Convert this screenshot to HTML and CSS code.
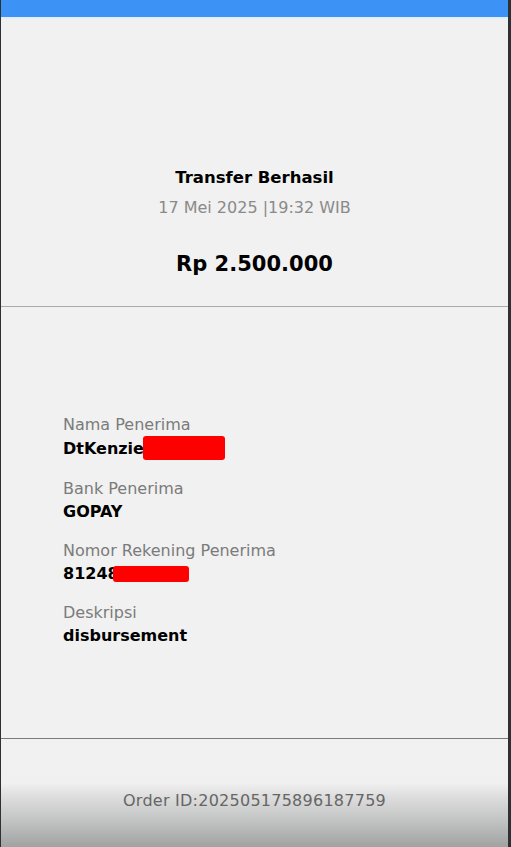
FILE: index.html
```html
<!DOCTYPE html>
<html lang="id">
<head>
<meta charset="utf-8">
<title>Transfer Berhasil</title>
<link rel="stylesheet" href="styles.css">
</head>
<body>
<div class="screen">
  <div class="topbar"></div>
  <section class="summary">
    <div class="title">Transfer Berhasil</div>
    <div class="date">17 Mei 2025 |19:32 WIB</div>
    <div class="amount">Rp 2.500.000</div>
  </section>
  <section class="details">
    <div class="field">
      <div class="label">Nama Penerima</div>
      <div class="value">DtKenzie<span class="redact redact-name"></span></div>
    </div>
    <div class="field">
      <div class="label">Bank Penerima</div>
      <div class="value">GOPAY</div>
    </div>
    <div class="field">
      <div class="label">Nomor Rekening Penerima</div>
      <div class="value">81248<span class="redact redact-acc"></span></div>
    </div>
    <div class="field">
      <div class="label">Deskripsi</div>
      <div class="value">disbursement</div>
    </div>
  </section>
  <footer class="footer">
    <div class="order">Order ID:202505175896187759</div>
  </footer>
</div>
</body>
</html>
```

FILE: styles.css
```css
* { box-sizing: border-box; }
html, body { margin: 0; padding: 0; }
body {
  width: 511px;
  height: 847px;
  overflow: hidden;
  background: #2e3133;
  font-family: "DejaVu Sans", sans-serif;
}
.screen {
  margin-left: 1px;
  width: 507px;
  height: 847px;
  background: #f0f1f0;
  display: flex;
  flex-direction: column;
}
.topbar {
  height: 19px;
  flex: none;
  background: #3d92f5;
  border-bottom: 2px solid #e2eef9;
}
.summary {
  height: 288px;
  flex: none;
  padding-top: 149px;
  text-align: center;
  border-bottom: 1px solid #a9abaa;
}
.title {
  font-size: 16.5px;
  line-height: 20px;
  font-weight: bold;
  color: #000;
}
.date {
  margin-top: 10px;
  font-size: 16px;
  line-height: 20px;
  color: #8a8a8a;
}
.amount {
  margin-top: 34px;
  font-size: 21px;
  line-height: 24px;
  font-weight: bold;
  color: #000;
}
.details {
  height: 432px;
  flex: none;
  padding: 108px 0 0 62px;
  border-bottom: 1px solid #7a7a7a;
  display: flex;
  flex-direction: column;
  gap: 19px;
}
.field {
  display: flex;
  flex-direction: column;
  gap: 3px;
}
.label {
  font-size: 16px;
  line-height: 20px;
  color: #7b7b7b;
}
.value {
  font-size: 16px;
  line-height: 20px;
  font-weight: bold;
  color: #000;
  display: flex;
  align-items: center;
}
.redact {
  display: inline-block;
  background: #fe0000;
  border-radius: 3px;
}
.redact-name {
  width: 82px;
  height: 24px;
  margin-left: -1px;
  margin-top: -2px;
}
.redact-acc {
  width: 76px;
  height: 16px;
  margin-left: -6px;
  margin-top: 0;
}
.footer {
  flex: 1;
  padding-top: 52px;
  text-align: center;
  background: linear-gradient(to bottom, #f0f1f0 0px, #eff0ef 44px, #dcdddc 58px, #c4c5c5 80px, #a2a3a3 107px);
}
.order {
  font-size: 16px;
  line-height: 20px;
  letter-spacing: 0.25px;
  color: #666;
}
```
